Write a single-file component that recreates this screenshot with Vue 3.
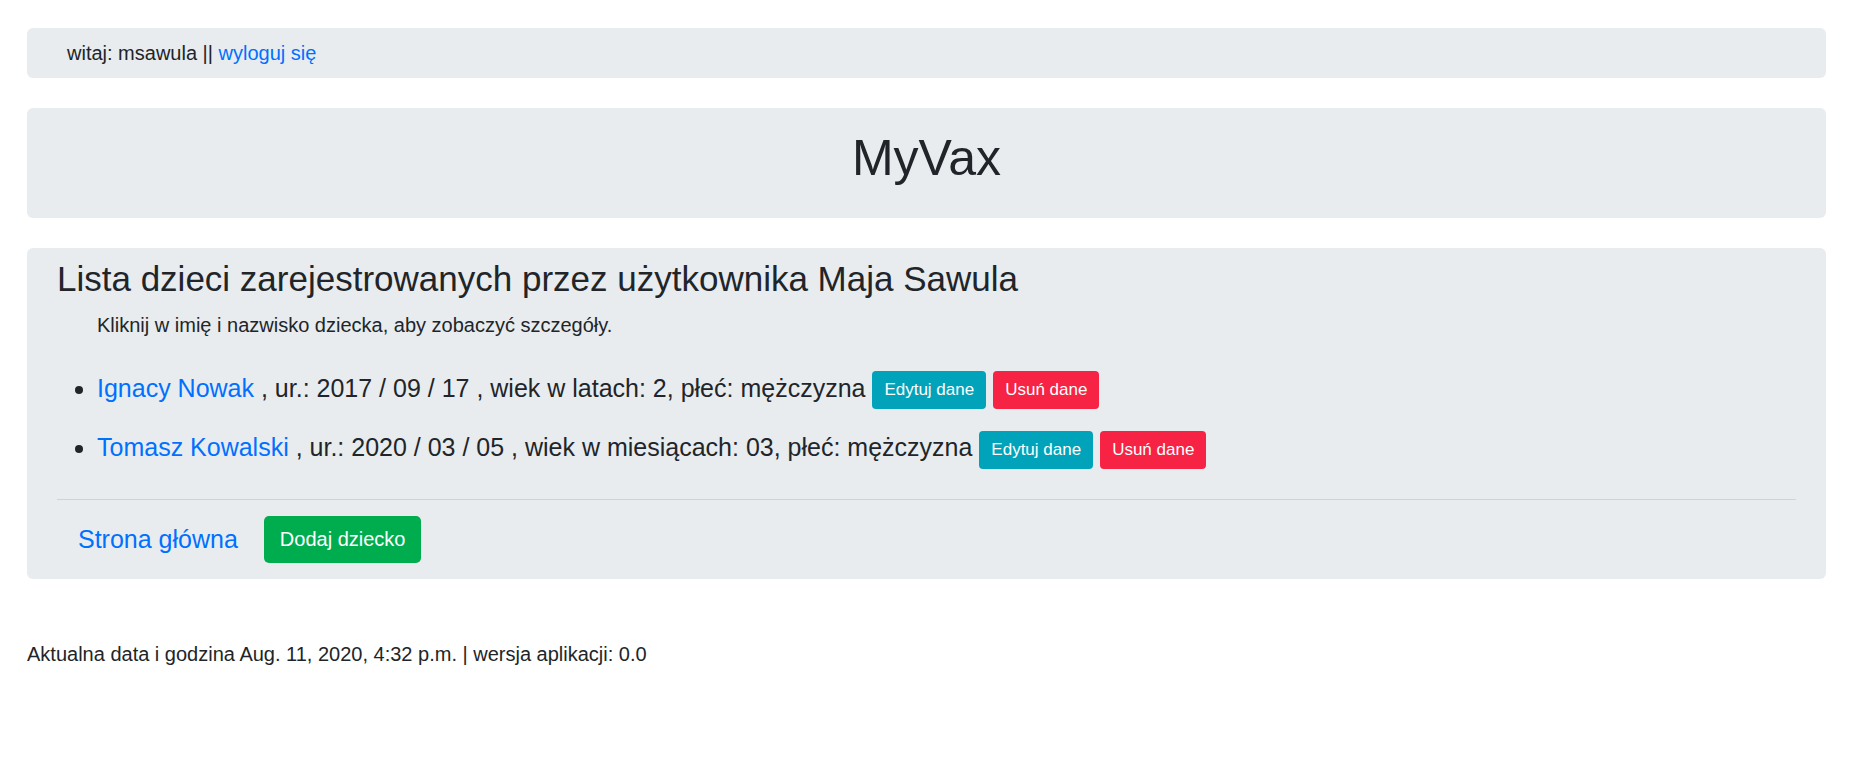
<script setup>
const children = [
  { name: 'Ignacy Nowak', born: '2017 / 09 / 17', age: 'wiek w latach: 2', sex: 'mężczyzna' },
  { name: 'Tomasz Kowalski', born: '2020 / 03 / 05', age: 'wiek w miesiącach: 03', sex: 'mężczyzna' },
]
</script>

<template>
  <div class="page">
    <nav class="panel user">witaj: msawula || <a href="#">wyloguj się</a></nav>
    <header class="panel brand">
      <h1>MyVax</h1>
    </header>
    <main class="panel content">
      <h2>Lista dzieci zarejestrowanych przez użytkownika Maja Sawula</h2>
      <p class="hint">Kliknij w imię i nazwisko dziecka, aby zobaczyć szczegóły.</p>
      <ul>
        <li v-for="child in children" :key="child.name">
          <a href="#">{{ child.name }}</a> , ur.: {{ child.born }} , {{ child.age }}, płeć: {{ child.sex }}
          <span class="actions">
            <button type="button" class="small info">Edytuj dane</button>
            <button type="button" class="small danger">Usuń dane</button>
          </span>
        </li>
      </ul>
      <hr />
      <div class="links">
        <a href="#">Strona główna</a>
        <button type="button" class="success">Dodaj dziecko</button>
      </div>
    </main>
    <footer>Aktualna data i godzina Aug. 11, 2020, 4:32 p.m. | wersja aplikacji: 0.0</footer>
  </div>
</template>

<style>
body {
  margin: 0;
  background: #fff;
}
</style>

<style scoped>
.page {
  padding: 28px 30px 30px 27px;
  font-family: "Liberation Sans", Arial, sans-serif;
  font-size: 20px;
  line-height: 30px;
  color: #212529;
}
.panel {
  margin-bottom: 30px;
  padding: 10px 30px;
  border-radius: 6px;
  background: #e8ecef;
}
.user {
  padding: 10px 40px;
}
.brand {
  padding: 20px 30px 30px;
  text-align: center;
}
h1,
h2 {
  margin: 0;
  font-weight: 400;
}
h1 {
  font-size: 50px;
  line-height: 60px;
}
h2 {
  margin-bottom: 10px;
  font-size: 35px;
  line-height: 42px;
}
.hint {
  margin: 0 0 30px;
  padding-left: 40px;
}
a {
  color: #0070ff;
  text-decoration: none;
}
ul {
  margin: 0;
  padding: 0 0 0 40px;
}
li {
  margin-bottom: 20px;
  font-size: 25px;
  line-height: 36px;
}
.actions {
  display: inline-flex;
  gap: 7px;
  vertical-align: middle;
}
button {
  padding: 8px 16px;
  border: 0;
  border-radius: 5px;
  font-family: inherit;
  font-size: 20px;
  line-height: 31px;
  color: #fff;
}
.small {
  padding: 6px 12px;
  border-radius: 4px;
  font-size: 17px;
  line-height: 26px;
}
.info {
  background: #00a3ba;
}
.danger {
  background: #f62344;
}
.success {
  background: #00ad4e;
}
hr {
  margin: 30px 0 16px;
  border: 0;
  border-top: 1px solid #cfd3d6;
}
.links {
  display: flex;
  align-items: center;
  gap: 26px;
  padding: 0 21px 6px;
  font-size: 25px;
}
footer {
  padding-top: 30px;
}
</style>
